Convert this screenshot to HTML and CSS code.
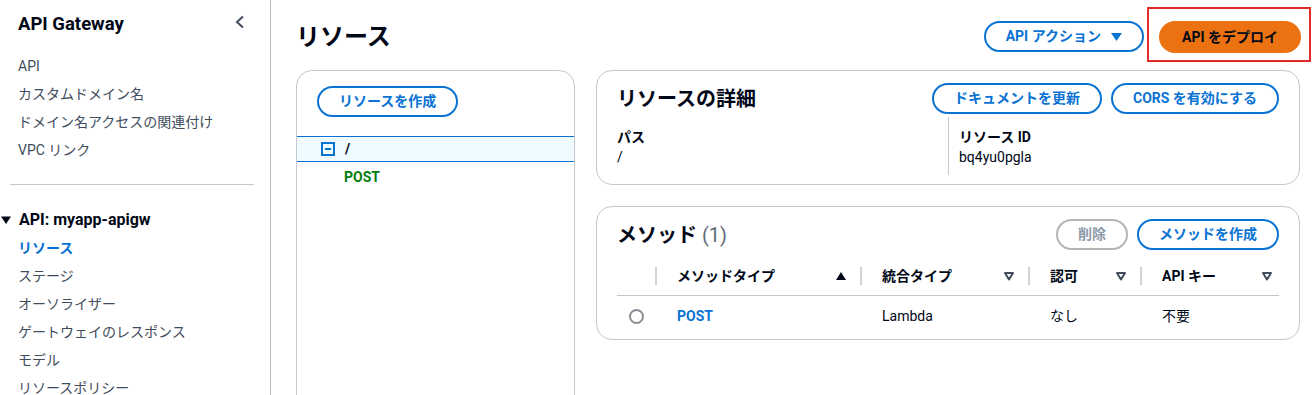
FILE: index.html
```
<!DOCTYPE html>
<html lang="ja">
<head>
<meta charset="utf-8">
<title>リソース - API Gateway</title>
<link rel="stylesheet" href="styles.css">
</head>
<body>
<div class="layout">
	<aside class="nav">
		<div class="nav-head">
			<span class="nav-title">API Gateway</span>
			<svg class="nav-close" width="12" height="14" viewBox="0 0 12 14"><polyline points="9,1.5 3,7 9,12.5" fill="none" stroke="#414d5c" stroke-width="2"/></svg>
		</div>
		<ul class="nav-list">
			<li>API</li>
			<li>カスタムドメイン名</li>
			<li>ドメイン名アクセスの関連付け</li>
			<li>VPC リンク</li>
		</ul>
		<div class="nav-sep"></div>
		<div class="nav-group">
			<svg class="nav-caret" width="10" height="10" viewBox="0 0 10 10"><polygon points="0,1.5 10,1.5 5,9" fill="#000716"/></svg>
			API: myapp-apigw
		</div>
		<ul class="nav-list">
			<li class="on">リソース</li>
			<li>ステージ</li>
			<li>オーソライザー</li>
			<li>ゲートウェイのレスポンス</li>
			<li>モデル</li>
			<li>リソースポリシー</li>
		</ul>
	</aside>

	<main class="main">
		<div class="page-head">
			<h1 class="page-title">リソース</h1>
			<div class="page-actions">
				<button class="btn btn-action">API アクション <svg width="11" height="10" viewBox="0 0 11 10"><polygon points="0,1 11,1 5.5,9" fill="#0972d3"/></svg></button>
				<span class="mark"><button class="btn btn-primary">API をデプロイ</button></span>
			</div>
		</div>

		<div class="content">
			<section class="card tree">
				<button class="btn">リソースを作成</button>
				<div class="tree-row sel">
					<svg class="tree-icon" width="14" height="14" viewBox="0 0 14 14"><rect x="1" y="1" width="12" height="12" fill="none" stroke="#0972d3" stroke-width="2"/><line x1="4" y1="7" x2="10" y2="7" stroke="#0972d3" stroke-width="2"/></svg>
					<span class="tree-path">/</span>
				</div>
				<div class="tree-row">
					<span class="tree-method">POST</span>
				</div>
			</section>

			<div class="cards">
				<section class="card panel">
					<div class="panel-head">
						<h2 class="panel-title">リソースの詳細</h2>
						<div class="panel-actions">
							<button class="btn">ドキュメントを更新</button>
							<button class="btn">CORS を有効にする</button>
						</div>
					</div>
					<div class="kv">
						<div class="kv-col">
							<div class="kv-key">パス</div>
							<div class="kv-val">/</div>
						</div>
						<div class="kv-col">
							<div class="kv-key">リソース ID</div>
							<div class="kv-val">bq4yu0pgla</div>
						</div>
					</div>
				</section>

				<section class="card panel methods">
					<div class="panel-head">
						<h2 class="panel-title">メソッド <span class="count">(1)</span></h2>
						<div class="panel-actions">
							<button class="btn btn-off">削除</button>
							<button class="btn">メソッドを作成</button>
						</div>
					</div>
					<div class="table">
						<div class="th first"></div>
						<div class="th"><span>メソッドタイプ</span><svg width="12" height="10" viewBox="0 0 12 10"><polygon points="1,9 11,9 6,1" fill="#000716"/></svg></div>
						<div class="th"><span>統合タイプ</span><svg width="12" height="10" viewBox="0 0 12 10"><polygon points="2,2 10,2 6,8.5" fill="none" stroke="#414d5c" stroke-width="2" stroke-linejoin="round"/></svg></div>
						<div class="th"><span>認可</span><svg width="12" height="10" viewBox="0 0 12 10"><polygon points="2,2 10,2 6,8.5" fill="none" stroke="#414d5c" stroke-width="2" stroke-linejoin="round"/></svg></div>
						<div class="th last"><span>API キー</span><svg width="12" height="10" viewBox="0 0 12 10"><polygon points="2,2 10,2 6,8.5" fill="none" stroke="#414d5c" stroke-width="2" stroke-linejoin="round"/></svg></div>

						<div class="td first"><span class="radio"></span></div>
						<div class="td link">POST</div>
						<div class="td">Lambda</div>
						<div class="td">なし</div>
						<div class="td">不要</div>
					</div>
				</section>
			</div>
		</div>
	</main>
</div>
</body>
</html>
```

FILE: styles.css
```
*{ margin:0; padding:0; box-sizing:border-box; list-style:none;}
body{ background:#fff; color:#000716; font-family:Roboto, "Noto Sans CJK JP", sans-serif; font-size:14px; line-height:20px; overflow:hidden;}

.layout{ display:flex; height:395px;}

/* side navigation */
.nav{ width:271px; flex:none; border-right:1px solid #b6bec9;}
.nav-head{ display:flex; align-items:center; justify-content:space-between; height:48px; padding:0 24px 0 18px;}
.nav-title{ font-size:18.5px; font-weight:700; line-height:24px;}
.nav-close{ margin-top:-4px;}
.nav-list{ padding-left:18px;}
.nav-list li{ line-height:28px; color:#414d5c;}
.nav-list li.on{ color:#0972d3; font-weight:700;}
.nav-head + .nav-list{ margin-top:4px;}
.nav-sep{ height:1px; background:#c6c6cd; margin:20px 16px 21px 10px;}
.nav-group{ display:flex; align-items:center; gap:8px; font-size:16px; font-weight:700; line-height:28px; padding-left:1px;}

/* main area */
.main{ flex:1; padding:0 13px 0 25px; min-width:0;}
.page-head{ display:flex; justify-content:space-between; align-items:flex-start; height:70px;}
.page-title{ font-size:24px; line-height:30px; font-weight:700; margin-top:22px;}
.page-actions{ display:flex; align-items:flex-start; gap:3px; margin-right:-11px;}
.btn-action{ margin-top:21px; display:flex; align-items:center; gap:10px;}
.mark{ display:block; margin-top:7px; border:2px solid #e22a28; padding:12px 8px 7px 10px;}

.btn{ font:inherit; font-weight:700; font-size:14px; line-height:19px; padding:4px 20px; border:2px solid #0972d3; border-radius:20px; background:#fff; color:#0972d3; white-space:nowrap;}
.btn-primary{ background:#ec7211; border-color:#ec7211; color:#000716; line-height:20px; padding:4px 21px;}
.btn-off{ border-color:#b4b4bb; color:#8d99a8;}

.content{ display:grid; grid-template-columns:279px 1fr; gap:21px;}
.card{ border:1px solid #c6c6cd; border-radius:16px; background:#fff;}

/* resource tree */
.tree{ height:340px; padding-top:15px; border-bottom-left-radius:0; border-bottom-right-radius:0;}
.tree .btn{ margin-left:20px;}
.tree-row{ display:flex; align-items:center; height:24px; padding-left:47px;}
.tree-row.sel{ margin-top:19px; height:26px; padding-left:24px; background:#f0fbff; border-top:1px solid #0972d3; border-bottom:1px solid #0972d3;}
.tree-icon{ margin-right:10px;}
.tree-path{ font-weight:700;}
.tree-method{ color:#037f0c; font-weight:700; margin-top:6px;}

/* panels */
.cards{ display:flex; flex-direction:column; gap:21px;}
.panel{ padding:12px 20px 9px;}
.panel.methods{ padding-bottom:4px;}
.panel-head{ display:flex; justify-content:space-between; align-items:center;}
.panel-title{ font-size:20px; line-height:28px; font-weight:700;}
.count{ font-weight:400; color:#5f6b7a;}
.panel-actions{ display:flex; gap:9px;}

.kv{ display:grid; grid-template-columns:1fr 1fr; margin-top:3px;}
.kv-col{ padding:10px 0 8px;}
.kv-col + .kv-col{ border-left:1px solid #c6c6cd; padding-left:10px;}
.kv-key{ font-weight:700;}

/* methods table */
.table{ display:grid; grid-template-columns:38px 205px 168px 112px 1fr; margin-top:7px;}
.th{ position:relative; display:flex; justify-content:space-between; align-items:center; margin:10px 0; height:18px; border-left:2px solid #d1d5db; padding:0 13px 0 20px; font-weight:700;}
.th.first{ border-left:0;}
.th.last{ padding-right:6px;}
.th::after{ content:""; position:absolute; left:-2px; right:0; bottom:-11px; height:1px; background:#c6c6cd;}
.th.first::after{ left:0;}
.td{ padding:11px 0 9px 22px;}
.td.first{ padding:0; display:flex; align-items:center; justify-content:center;}
.td.link{ color:#0972d3; font-weight:700;}
.radio{ width:15px; height:15px; border:2px solid #8c8c94; border-radius:50%; margin-top:2px;}
```
